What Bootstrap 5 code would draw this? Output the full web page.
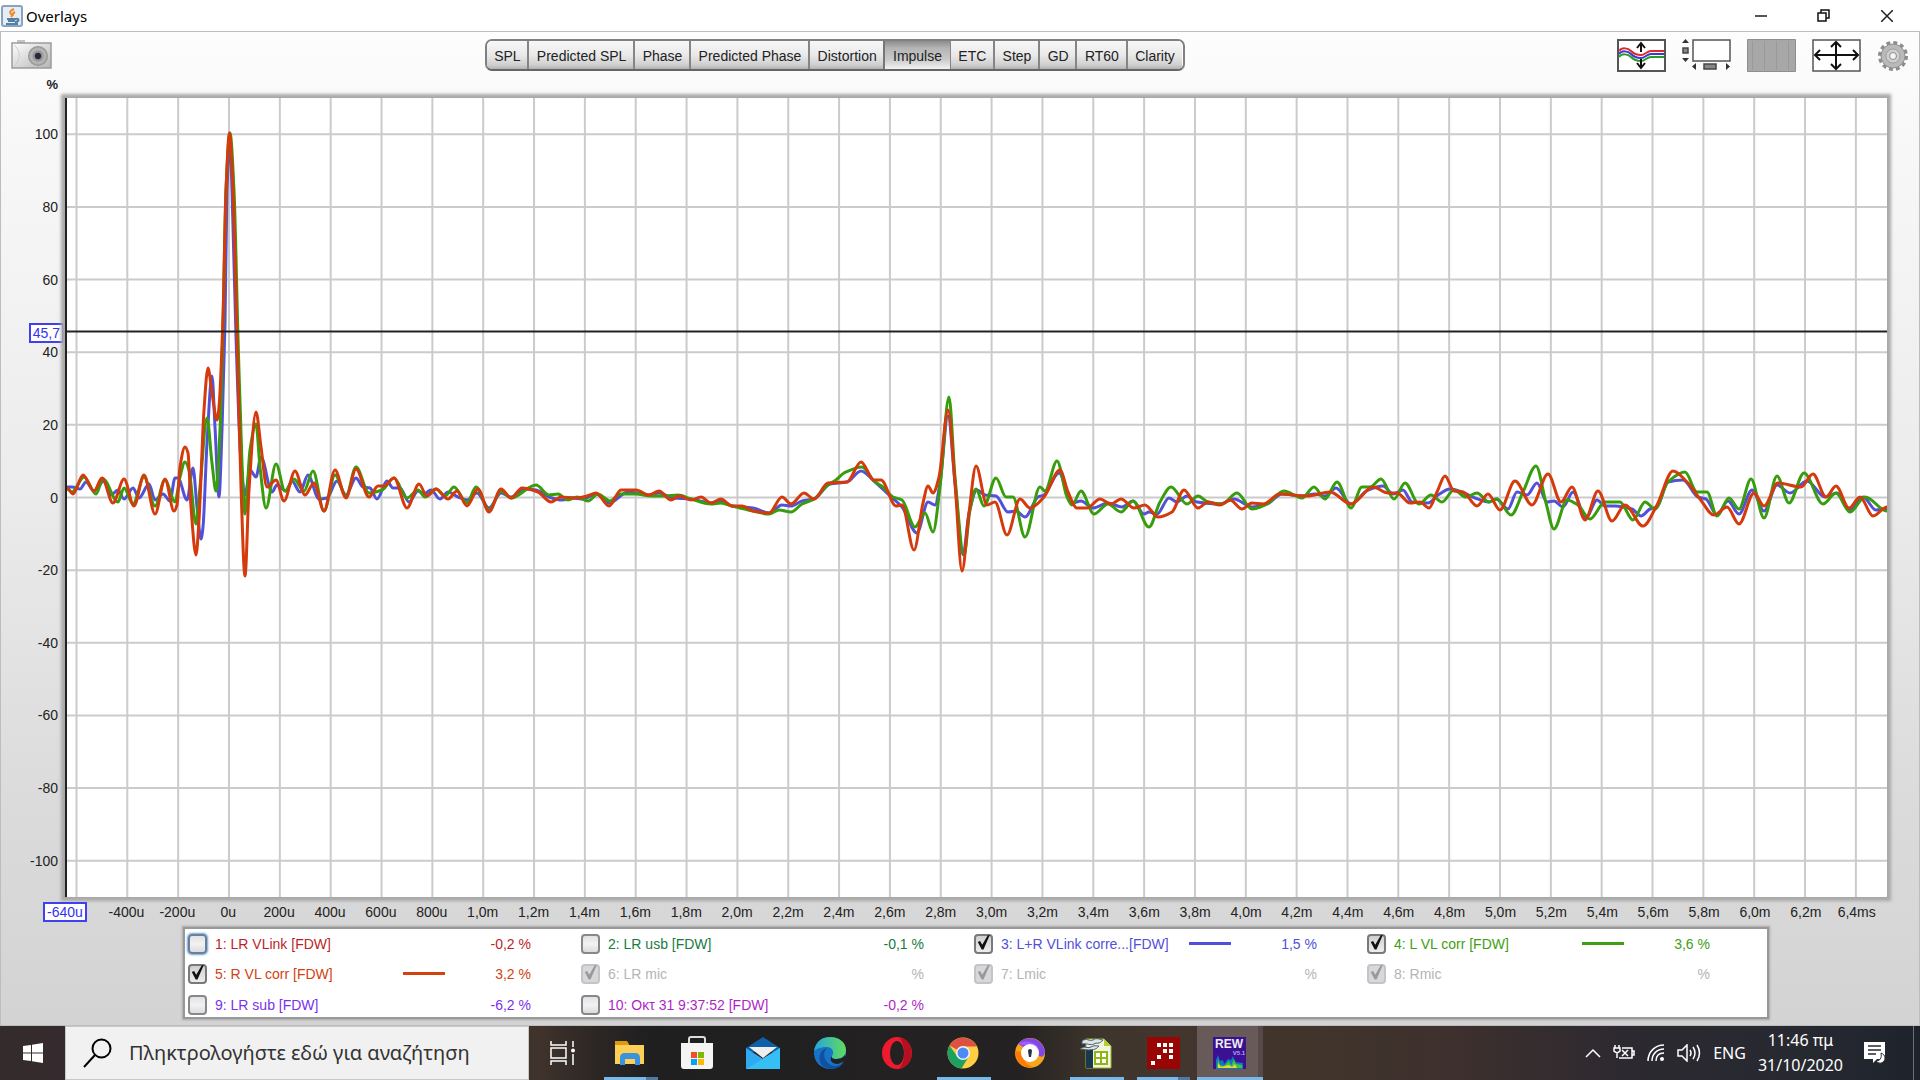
<!DOCTYPE html>
<html lang="el">
<head>
<meta charset="utf-8">
<meta name="viewport" content="width=device-width, initial-scale=1">
<title>Overlays</title>
<link href="https://cdn.jsdelivr.net/npm/bootstrap@5.3.0/dist/css/bootstrap.min.css" rel="stylesheet">
<style>
  body { font-family: "Liberation Sans", Arial, sans-serif; font-size: 14px; line-height: 20px; color: #222; background: #fff; overflow: hidden; }
  svg { display: block; }
  .ui-title { height: 31px; font-family: "Noto Sans", sans-serif; font-size: 15px; color: #000; padding-left: 1px; padding-right: 2px; }
  .ui-title .app-name { margin-left: 3px; }
  .win-btn { width: 63px; height: 30px; border: 0; background: none; padding: 0; display: flex; align-items: center; justify-content: center; }
  .workspace { border: 1px solid #bdbdbd; background: linear-gradient(#fdfdfd, #f8f8f8 10%, #ececec 45%, #dcdcdc 75%, #d3d3d3); min-height: 0; }
  .toolbar { height: 46px; padding: 7px 10px 0 9px; }
  .tool { border: 0; background: none; padding: 0; }
  .tabs { width: 700px; height: 32px; border: 2px solid #808080; border-bottom-color: #666; border-radius: 7px; overflow: hidden; }
  .tabs .btn { font-size: 14px; line-height: 20px; padding: 5px 5px 3px; color: #222; border: 0; border-left: 2px solid #858585; border-radius: 0; background: linear-gradient(#f8f8f8, #e9e9e9 50%, #d0d0d0 85%, #b2b2b2); white-space: nowrap; }
  .tabs .btn:first-child { border-left: 0; }
  .tabs .btn.active { color: #222; background: linear-gradient(#8c8c8c, #b4b4b4 25%, #c9c9c9 65%, #f2f2f2); border-color: #777; }
  .unit { height: 20px; width: 57px; text-align: right; margin-top: -3px; margin-bottom: 3px; font-weight: bold; font-size: 13px; }
  .plot-row { min-height: 0; }
  .y-axis { width: 64px; padding-right: 7px; position: relative; }
  .y-axis span { flex: 1 1 0; display: flex; align-items: center; justify-content: flex-end; }
  .plot { background: #fff; border-left: 2px solid #222; box-shadow: 0 0 3px 4px #a9a9a9; margin-right: 32px; min-width: 0; min-height: 0; position: relative; }
  .plot svg { position: absolute; inset: 0; width: 100%; height: 100%; }
  .grid-line { stroke: #cbcbcb; stroke-width: 2; vector-effect: non-scaling-stroke; }
  .trace { fill: none; stroke-width: 3; stroke-linejoin: round; vector-effect: non-scaling-stroke; }
  .readout { position: absolute; border: 2px solid #4040ee; background: #fff; color: #3333ee; line-height: 16px; padding: 0 2px; }
  .y-axis .readout { top: 28.1%; right: 1px; }
  .x-axis { height: 30px; padding: 5px 37px 0 100px; position: relative; }
  .x-axis span { flex: 1 1 0; width: 0; display: flex; justify-content: center; white-space: nowrap; }
  .x-axis .readout { left: 42px; top: 5px; width: auto; }
  .legend-box { margin: 0 150px 6px 182px; background: #fff; border: 2px solid #989898; box-shadow: 0 0 2px 1px #a8a8a8; padding: 0 7px 0 3px; height: 92px; display: grid; grid-template-columns: repeat(4, 1fr); grid-template-rows: 29px 31px 31px; align-content: start; }
  .trace-row { padding-right: 50px; }
  .trace-row label { margin-left: 8px; width: 180px; white-space: nowrap; flex: none; }
  .key { width: 42px; height: 3px; margin-left: 8px; background: currentColor; }
  .tick-box { appearance: none; width: 19px; height: 20px; flex: none; margin: 0; border: 2px solid #85898e; border-radius: 4px; background: linear-gradient(#e2e2e2, #f2f2f2 50%, #dcdcdc); position: relative; }
  .tick-box.focused { border-color: #68809a; box-shadow: 0 0 2px 1px #6aa5da; }
  .tick-box:checked { background: linear-gradient(#d0d0d0, #ededed); border-color: #77797c; }
  .tick-box:checked::before { content: ""; position: absolute; inset: -1px 1px 2px 1px; background: #111; clip-path: polygon(6% 50%, 24% 44%, 40% 68%, 82% 6%, 100% 0, 50% 100%, 36% 100%); }
  .tick-box:disabled { border-color: #c1c5cb; background: #d8d8d8; }
  .tick-box:disabled::before { background: #999; }
  .c1 { color: #bb1f29; } .c2 { color: #187a45; } .c3 { color: #5050d8; } .c4 { color: #3da012; }
  .c5 { color: #d3420f; } .c9 { color: #7b2ff0; } .c10 { color: #b01fc8; } .c-off { color: #b4b4b4; }
  .taskbar { height: 54px; background: linear-gradient(90deg, #342b2c 0, #352b2e 3.4%, #40332c 28%, #2c2725 31%, #1f1f20 34%, #232122 48%, #232122 53%, #3d352b 57%, #43362f 61%, #40342b 68%, #3d302e 76%, #2c2930 85%, #272931 94%, #1e232b); font-family: "Noto Sans", sans-serif; color: #fff; }
  .task-btn { border: 0; background: none; padding: 0; height: 54px; position: relative; display: flex; align-items: center; justify-content: center; }
  .start-btn { width: 65px; }
  .search-box { width: 464px; background: #f1f1f1; border: 1px solid #c8c8c8; padding-left: 17px; }
  .search-box input { border: 0; background: none; outline: 0; font-size: 20px; line-height: 28px; color: #333; padding: 0; width: 380px; margin-left: 17px; }
  .search-box input::placeholder { color: #333; opacity: 1; }
  .view-btn { width: 68px; }
  .apps { width: 666px; }
  .apps .task-btn { flex: 1 1 0; }
  .running::after { content: ""; position: absolute; bottom: 0; left: 7px; right: 6px; height: 3px; background: #76b9ed; }
  .stacked::after { background: linear-gradient(90deg, #76b9ed 78%, #4f7ba0 78%); }
  .current { background: linear-gradient(90deg, transparent 0, transparent 1px, #675a58 1px, #675a58 62px, #56494a 62px); }
  .current::after { left: 1px; right: 0; }
  .tray { gap: 12px; padding-right: 10px; }
  .tray .tray-text { font-size: 16px; line-height: 25px; text-align: center; }
  .desk-edge { width: 7px; border-left: 1px solid #6d7076; }
</style>
<script src="https://cdn.jsdelivr.net/npm/bootstrap@5.3.0/dist/js/bootstrap.bundle.min.js"></script>
</head>
<body class="vh-100 d-flex flex-column">

<header class="ui-title d-flex align-items-center flex-shrink-0">
  <svg width="22" height="22" viewBox="0 0 22 22"><rect x="1" y="1" width="20" height="20" rx="2" fill="#e6edf4" stroke="#86a4bf" stroke-width="2"/><path d="M13 4c-4 2-5 3-3 5s1 2 0 3M14 7c-2 1-3 2-2 4" fill="none" stroke="#ee8a30" stroke-width="2"/><path d="M6 14h9M7 16h7M5 19h12M15 14c4-1 3 3-1 3" fill="none" stroke="#5480a4" stroke-width="2"/></svg>
  <span class="app-name me-auto">Overlays</span>
  <button class="win-btn" aria-label="Minimize"><svg width="12" height="12"><path d="M0 6h12" stroke="#555" stroke-width="2"/></svg></button>
  <button class="win-btn" aria-label="Restore"><svg width="13" height="13" fill="none" stroke="#111" stroke-width="1.5"><path d="M1 4h8v8H1zM4 4V1h8v8H9"/></svg></button>
  <button class="win-btn" aria-label="Close"><svg width="12" height="12" stroke="#222" stroke-width="1.5"><path d="M0 0l12 12M12 0L0 12"/></svg></button>
</header>

<main class="workspace flex-fill d-flex flex-column">
  <div class="toolbar d-flex justify-content-between align-items-start flex-shrink-0">
    <button class="tool" aria-label="Capture">
      <svg width="42" height="32" viewBox="0 0 42 32"><defs><linearGradient id="cam" x2="1" y2="1"><stop stop-color="#fff"/><stop offset="1" stop-color="#b5b5b5"/></linearGradient><radialGradient id="lens"><stop offset=".15" stop-color="#1b1b2a"/><stop offset=".35" stop-color="#888"/><stop offset=".7" stop-color="#bbb"/><stop offset="1" stop-color="#8d8d8d"/></radialGradient></defs><path d="M7 1h8v4H7z" fill="#c4c4c4"/><path d="M2 4h39v25H2z" fill="url(#cam)" stroke="#9c9c9c" stroke-width="1.5"/><path d="M4 6c7 5 7 15 0 22" fill="none" stroke="#ccc"/><circle cx="28" cy="17" r="10" fill="url(#lens)"/><circle cx="28" cy="17" r="3" fill="#26263c"/></svg>
    </button>
    <div class="tabs btn-group" role="group" aria-label="Graph type">
      <button class="btn">SPL</button><button class="btn">Predicted SPL</button><button class="btn">Phase</button><button class="btn">Predicted Phase</button><button class="btn">Distortion</button><button class="btn active" aria-pressed="true">Impulse</button><button class="btn">ETC</button><button class="btn">Step</button><button class="btn">GD</button><button class="btn">RT60</button><button class="btn">Clarity</button>
    </div>
    <div class="d-flex justify-content-end gap-3">
      <button class="tool" aria-label="Separate traces"><svg width="49" height="33" viewBox="0 0 49 33" fill="none"><path d="M1 1h47v31H1z" fill="#fff" stroke="#555" stroke-width="2"/><g stroke-width="2"><path d="M2 12c3-4 9-3 12 0s6 4 10 4 6-4 10-4h13" stroke="#dd2a2a"/><path d="M2 15c3-4 9-3 12 0s6 4 10 4 6-4 10-4h13" stroke="#3a3acc"/><path d="M2 18c3-4 9-3 12 0s6 4 10 4 6-4 10-4h13" stroke="#2a9a2a"/></g><path d="M24 4v9M24 20v9M20 9l4-5 4 5M20 24l4 5 4-5" stroke="#111" stroke-width="2"/></svg></button>
      <button class="tool" aria-label="Scroll bars"><svg width="49" height="33" viewBox="0 0 49 33"><path d="M11 1h37v21H11z" fill="#fff" stroke="#555" stroke-width="1.5"/><path d="M0 4h7L3.500 0zM0 19h7l-3.500 4zM14 24v7l-4-3.500zM44 24v7l4-3.500z" fill="#333"/><path d="M1 9h5v5H1zM22 25h12v5H22z" fill="#888" stroke="#444" stroke-width="1.500"/></svg></button>
      <button class="tool" aria-label="Bands"><svg width="49" height="33" viewBox="0 0 49 33"><path d="M.5.5h48v32H.5z" fill="#a7a7a7" stroke="#8e8e8e"/><path d="M5.500 2v29M17.500 2v29M29.500 2v29M41.500 2v29" stroke="#999"/></svg></button>
      <button class="tool" aria-label="Graph limits"><svg width="49" height="33" viewBox="0 0 49 33"><path d="M1 1h47v31H1z" fill="#fff" stroke="#555" stroke-width="1.500"/><path d="M3 16h43M24 3v27M8 11l-5 5 5 5M41 11l5 5-5 5M19 8l5-5 5 5M19 25l5 5 5-5" fill="none" stroke="#111" stroke-width="2"/></svg></button>
      <button class="tool" aria-label="Controls"><svg width="32" height="33" viewBox="0 0 32 33"><circle cx="16" cy="17" r="13" fill="none" stroke="#8c8c8c" stroke-width="4" stroke-dasharray="3.8 3"/><circle cx="16" cy="17" r="12" fill="#b9b9b9" stroke="#8f8f8f"/><circle cx="16" cy="17" r="7" fill="#d0d0d0" stroke="#a0a0a0"/><circle cx="16" cy="17" r="3.500" fill="#f5f5f5" stroke="#8a8a8a"/></svg></button>
    </div>
  </div>

  <div class="unit flex-shrink-0">%</div>

  <div class="plot-row d-flex flex-fill">
    <div class="y-axis d-flex flex-column flex-shrink-0" id="yAxis">
      <span class="readout">45,7</span>
    </div>
    <div class="plot flex-fill">
      <svg id="chart" viewBox="67 98 1820 799" preserveAspectRatio="none" role="img" aria-label="Impulse response"></svg>
    </div>
  </div>

  <div class="x-axis d-flex flex-shrink-0" id="xAxis">
    <span class="readout">-640u</span>
  </div>

  <div class="legend-box flex-shrink-0">
    <div class="trace-row d-flex align-items-center c1"><input class="tick-box focused" type="checkbox" id="t1"><label for="t1">1: LR VLink [FDW]</label><span class="ms-auto">-0,2 %</span></div>
    <div class="trace-row d-flex align-items-center c2"><input class="tick-box" type="checkbox" id="t2"><label for="t2">2: LR usb [FDW]</label><span class="ms-auto">-0,1 %</span></div>
    <div class="trace-row d-flex align-items-center c3"><input class="tick-box" type="checkbox" id="t3" checked><label for="t3">3: L+R VLink corre...[FDW]</label><i class="key"></i><span class="ms-auto">1,5 %</span></div>
    <div class="trace-row d-flex align-items-center c4"><input class="tick-box" type="checkbox" id="t4" checked><label for="t4">4: L VL corr [FDW]</label><i class="key"></i><span class="ms-auto">3,6 %</span></div>
    <div class="trace-row d-flex align-items-center c5"><input class="tick-box" type="checkbox" id="t5" checked><label for="t5">5: R VL corr [FDW]</label><i class="key"></i><span class="ms-auto">3,2 %</span></div>
    <div class="trace-row d-flex align-items-center c-off"><input class="tick-box" type="checkbox" id="t6" checked disabled><label for="t6">6: LR mic</label><span class="ms-auto">%</span></div>
    <div class="trace-row d-flex align-items-center c-off"><input class="tick-box" type="checkbox" id="t7" checked disabled><label for="t7">7: Lmic</label><span class="ms-auto">%</span></div>
    <div class="trace-row d-flex align-items-center c-off"><input class="tick-box" type="checkbox" id="t8" checked disabled><label for="t8">8: Rmic</label><span class="ms-auto">%</span></div>
    <div class="trace-row d-flex align-items-center c9"><input class="tick-box" type="checkbox" id="t9"><label for="t9">9: LR sub [FDW]</label><span class="ms-auto">-6,2 %</span></div>
    <div class="trace-row d-flex align-items-center c10"><input class="tick-box" type="checkbox" id="t10"><label for="t10">10: Οκτ 31 9:37:52 [FDW]</label><span class="ms-auto">-0,2 %</span></div>
  </div>
</main>

<footer class="taskbar d-flex flex-shrink-0">
  <button class="task-btn start-btn" aria-label="Start"><svg width="20" height="20" viewBox="0 0 20 20" fill="#fff"><path d="M0 3l8-1v7.500H0zM9 1.800L20 0v9.500H9zM0 10.500h8V18l-8-1zM9 10.500h11V20L9 18.200z"/></svg></button>
  <div class="search-box d-flex align-items-center">
    <svg width="29" height="30" viewBox="0 0 29 30" fill="none" stroke="#000" stroke-width="2"><circle cx="18.500" cy="10.500" r="9"/><path d="M12 17L1 29"/></svg>
    <input type="text" aria-label="Αναζήτηση" placeholder="Πληκτρολογήστε εδώ για αναζήτηση">
  </div>
  <button class="task-btn view-btn" aria-label="Task view"><svg width="26" height="24" viewBox="0 0 26 24" fill="none" stroke="#fff" stroke-width="1.500"><path d="M1 0v4h15V0M1 24v-4h15v4M1 7h15v10H1zM23 0v6M23 13v11"/><circle cx="23" cy="9.500" r="2" fill="#fff" stroke="none"/></svg></button>
  <div class="apps d-flex">
    <button class="task-btn running stacked" aria-label="File Explorer"><svg width="30" height="24" viewBox="0 0 30 24"><path d="M0 0h12l2 3v3H0z" fill="#dc9a0c"/><path d="M0 4h29v19H0z" fill="#fbcf58"/><path d="M5 24v-7q0-5 5-5h10q5 0 5 5v7h-5v-6H10v6z" fill="#3993de"/></svg></button>
    <button class="task-btn" aria-label="Store"><svg width="34" height="34" viewBox="0 0 34 34"><path d="M9 8V3q0-2 2-2h12q2 0 2 2v5" fill="none" stroke="#ddd" stroke-width="2"/><path d="M1 7h32v23q0 3-3 3H4q-3 0-3-3z" fill="#f4f4f4"/><path d="M11 16h6v6h-6z" fill="#f25022"/><path d="M18 16h6v6h-6z" fill="#7fba00"/><path d="M11 23h6v6h-6z" fill="#00a4ef"/><path d="M18 23h6v6h-6z" fill="#ffb900"/></svg></button>
    <button class="task-btn" aria-label="Mail"><svg width="34" height="32" viewBox="0 0 34 32"><path d="M0 11L17 0l17 11v4H0z" fill="#0f5ea8"/><path d="M0 11l17 11 17-11v21H0z" fill="#2fa9ef"/><path d="M0 32l34-21v21z" fill="#35bff5"/><path d="M3 10h28L17 21z" fill="#eee"/></svg></button>
    <button class="task-btn" aria-label="Edge"><svg width="34" height="34" viewBox="0 0 34 34"><defs><linearGradient id="edg" x2="1"><stop stop-color="#25a5dd"/><stop offset="1" stop-color="#62dc5b"/></linearGradient></defs><circle cx="17" cy="17" r="16" fill="#1873c8"/><path d="M1 15C3 4 10 1 17 1c10 0 16 6 16 13 0 6-5 9-10 9-3 0-5-1-4-3 3-4 0-9-5-9-6 0-11 2-13 4z" fill="url(#edg)"/><path d="M14 12c-6 6-2 17 8 18 4 0 7-2 9-5-3 8-13 10-20 6C4 27 5 14 14 12z" fill="#12519f"/><path d="M19 20c-1 2 1 3 4 3 4 0 7-1 9-4l2 5-9 4c-7 0-9-5-6-8z" fill="#222"/></svg></button>
    <button class="task-btn" aria-label="Opera"><svg width="30" height="32" viewBox="0 0 30 32"><ellipse cx="15" cy="16" rx="15" ry="16" fill="#ee1b2e"/><path d="M17 1c17 1 17 29 0 30 7-5 7-25 0-30z" fill="#b5101f"/><ellipse cx="15" cy="16" rx="7" ry="12" fill="#222"/></svg></button>
    <button class="task-btn running" aria-label="Chrome"><svg width="32" height="32" viewBox="0 0 32 32"><circle cx="16" cy="16" r="15.500" fill="#ffce44"/><path d="M16 16L2.500 8.500a15.500 15.500 0 0 1 27.500 1H16z" fill="#dd5144"/><path d="M2.500 8.500A15.500 15.500 0 0 0 14.500 31.500L22 19H10z" fill="#1da160"/><circle cx="16" cy="16" r="7" fill="#f3f3f3"/><circle cx="16" cy="16" r="5.500" fill="#4c8bf5"/></svg></button>
    <button class="task-btn" aria-label="Secure Browser"><svg width="30" height="32" viewBox="0 0 30 32"><circle cx="15" cy="16" r="15" fill="#f6a61d"/><path d="M3 7C10-3 28 0 30 15c-1 5-4 6-7 3z" fill="#7f49e8"/><path d="M3 7c7-5 18-2 21 5L12 9z" fill="#a65cff"/><path d="M0 14c0 10 8 18 18 16-6-2-10-6-11-15z" fill="#ff7a00"/><circle cx="15" cy="16" r="9" fill="#fff"/><path d="M13 14a2 2 0 1 1 4 0l-1 6h-2z" fill="#234"/></svg></button>
    <button class="task-btn running" aria-label="Calc"><svg width="32" height="32" viewBox="0 0 32 32"><path d="M6 2h18l7 7v22H6z" fill="#f1f5dc" stroke="#9db434"/><path d="M24 2v7h7z" fill="#b4cc38"/><path d="M6 10h7v21H6z" fill="#17384e"/><path d="M14 14h14v14H14z" fill="#8fb612"/><path d="M16 16h4v4h-4zM22 16h4v4h-4zM16 22h4v4h-4zM22 22h4v4h-4z" fill="#fff"/><path d="M2 4c5-4 7 1 11-1 4-3 7 0 10 0-4 5-6 2-9 4-4 2-6-1-12 0z" fill="#dce4e8" stroke="#4a5f6c"/><path d="M0 12c5-4 7 0 11-2 3-2 5-1 8-1-4 5-7 3-10 4-3 0-5-1-9-1z" fill="#dce4e8" stroke="#4a5f6c"/></svg></button>
    <button class="task-btn running stacked" aria-label="Player"><svg width="33" height="32" viewBox="0 0 33 32"><path d="M0 0h33v32H0z" fill="#990505"/><path d="M10 6h4v4h-4zM16 6h4v4h-4zM22 6h4v4h-4zM16 12h4v4h-4zM22 12h4v4h-4zM10 18h4v4h-4zM22 18h4v4h-4zM4 24h4v4H4z" fill="#fff"/></svg></button>
    <button class="task-btn running current" aria-label="REW"><svg width="33" height="32" viewBox="0 0 33 32"><path d="M0 0h33v32H0z" fill="#3a1193"/><path d="M3 32V23l2-5 2 6 3-1 1 4 4-5 3 1 2-4 2 6 8 1v6z" fill="#1673c0"/><path d="M4 31l1-9 2 6 4 1 5-5 2 5 3-7 2 5 6 1v3z" fill="#32c848"/><path d="M5 31v-5l3 4 8-2 3 2 3-3 2 4z" fill="#ecd52f"/><text x="16" y="11" text-anchor="middle" font-family="Liberation Sans, sans-serif" font-weight="bold" font-size="12" fill="#eee">REW</text><text x="26" y="18" text-anchor="middle" font-family="Liberation Sans, sans-serif" font-weight="bold" font-size="6" fill="#bba5f0">V5.1</text></svg></button>
  </div>
  <div class="tray d-flex align-items-center ms-auto">
    <svg width="16" height="10" fill="none" stroke="#fff" stroke-width="1.500"><path d="M1 9l7-7 7 7"/></svg>
    <svg width="22" height="18" viewBox="0 0 22 18" fill="none" stroke="#fff" stroke-width="1.500"><path d="M2 1v3M6 1v3M1 4h6v3L4 9 1 7zM4 9v5M9 4h10v10H6M19 7h2v4h-2M9 6l6 6M15 6l-6 6"/></svg>
    <svg width="18" height="18" viewBox="0 0 18 18" fill="none" stroke="#fff" stroke-width="1.500"><path d="M1 17C1 8 8 1 17 1M5 17c0-7 5-12 12-12M9 17c0-5 3-8 8-8"/><circle cx="15" cy="15" r="2" fill="#fff" stroke="none"/></svg>
    <svg width="24" height="18" viewBox="0 0 24 18" fill="none" stroke="#fff" stroke-width="1.500"><path d="M1 6h4l5-5v16l-5-5H1zM13 6q2 3 0 6M16 3q4 6 0 12M20 1q5 8 0 16"/></svg>
    <span class="tray-text">ENG</span>
    <div class="tray-text">11:46 πμ<br>31/10/2020</div>
    <svg class="ms-2 me-3" width="24" height="24" viewBox="0 0 24 24"><path d="M1 1h21v17h-8l-4 4v-4H1z" fill="#fff"/><path d="M5 5h13M5 9h13M5 13h8" stroke="#272931" stroke-width="1.500"/><path d="M18 12c1 5-1 8-5 8 3 4 9 2 9-3 0-3-2-4-4-5z" fill="#fff" stroke="#272931"/></svg>
  </div>
  <div class="desk-edge"></div>
</footer>

<script>
  const NS = 'http://www.w3.org/2000/svg';
  const chart = document.getElementById('chart');
  // Chart units: one 200 us step is 50.84 wide, one 20 % step is 72.65 high.
  const X0 = 229, DX = 50.84, Y0 = 497.500, DY = 72.65;

  function add(name, attrs) {
    const el = document.createElementNS(NS, name);
    for (const k in attrs) el.setAttribute(k, attrs[k]);
    chart.appendChild(el);
  }
  for (let i = -3; i <= 32; i++) add('line', { class: 'grid-line', x1: X0 + i * DX, x2: X0 + i * DX, y1: 98, y2: 897 });
  for (let i = -5; i <= 5; i++) add('line', { class: 'grid-line', x1: 67, x2: 1887, y1: Y0 - i * DY, y2: Y0 - i * DY });

  for (let v = 100; v >= -100; v -= 20) {
    const s = document.createElement('span');
    s.textContent = v;
    document.getElementById('yAxis').appendChild(s);
  }
  for (let i = -2; i <= 32; i++) {
    const s = document.createElement('span');
    s.textContent = i < 5 ? i * 200 + 'u' : (i / 5).toFixed(1).replace('.', ',') + (i === 32 ? 'ms' : 'm');
    document.getElementById('xAxis').appendChild(s);
  }

  // Monotone cubic through the samples, so that peaks stay where they are.
  function curve(text) {
    const p = text.trim().split(/\s+/).map(s => s.split(',').map(Number));
    const n = p.length, d = [], m = [];
    for (let i = 0; i < n - 1; i++) d.push((p[i + 1][1] - p[i][1]) / (p[i + 1][0] - p[i][0]));
    for (let i = 0; i < n; i++) {
      if (i === 0 || i === n - 1 || d[i - 1] * d[i] <= 0) m.push(0);
      else m.push(2 * d[i - 1] * d[i] / (d[i - 1] + d[i]));
    }
    let out = 'M' + p[0];
    for (let i = 0; i < n - 1; i++) {
      const h = (p[i + 1][0] - p[i][0]) / 3;
      out += `C${p[i][0] + h},${p[i][1] + m[i] * h} ${p[i + 1][0] - h},${p[i + 1][1] - m[i + 1] * h} ${p[i + 1]}`;
    }
    return out;
  }
  const traces = [
    ['#5252d8', `67,487 72,487 80,489 86,482 94,491 104,481 111,495 118,490 124,499 133,488 139,498 149,484 155,500 163,494 170,501 175,478 178,478 187,500 193,468 197,507 201,539 203,527 207,443 212,376 215,427 219,497 222,430 225,323 227,190 230,140 232,190 236,337 241,463 245,495 250,470 256,477 261,457 272,492 277,485 286,491 292,481 300,492 308,475 319,499 327,498 337,481 346,495 356,478 363,487 370,488 377,499 387,481 393,488 400,488 409,502 418,491 424,494 431,490 440,499 448,492 458,497 467,500 477,493 489,508 501,493 511,497 524,489 536,490 549,497 562,500 573,498 583,499 596,494 609,503 628,492 649,495 659,493 673,498 691,499 711,503 721,501 732,506 753,508 769,513 782,505 791,506 802,501 814,499 830,484 847,482 861,471 874,481 889,495 902,507 917,533 928,502 935,505 940,483 948,416 955,483 963,555 969,513 977,490 985,495 996,496 1008,512 1016,511 1025,517 1038,497 1044,495 1059,473 1072,503 1081,501 1093,508 1108,503 1122,507 1133,501 1144,514 1149,512 1157,514 1169,498 1177,502 1187,496 1197,502 1220,504 1234,499 1252,507 1267,504 1282,494 1302,496 1315,494 1325,496 1336,488 1351,504 1368,490 1383,486 1393,494 1403,490 1412,502 1428,503 1438,495 1450,489 1462,492 1475,498 1489,502 1496,499 1508,509 1517,492 1527,495 1537,483 1547,502 1554,501 1563,507 1573,492 1586,518 1597,500 1605,506 1615,506 1632,509 1641,516 1650,509 1657,507 1668,482 1683,480 1698,497 1706,499 1717,515 1728,501 1739,514 1752,490 1764,511 1777,485 1790,493 1807,481 1825,497 1837,493 1849,510 1863,497 1876,510 1887,509`],
    ['#379d0c', `67,489 72,492 84,477 96,494 103,479 118,502 124,488 133,504 144,477 155,506 165,480 175,502 180,477 185,462 189,470 196,524 200,487 207,418 212,463 216,491 220,430 223,323 226,190 230,133 234,190 238,337 242,463 245,514 250,450 256,424 260,467 266,508 276,464 285,491 294,479 304,491 313,471 324,511 335,475 346,496 356,467 369,493 382,490 394,478 407,498 418,490 425,497 436,489 445,496 454,487 467,503 476,487 489,510 501,491 511,498 536,485 549,495 558,494 568,500 577,497 588,501 598,494 610,501 620,494 636,494 651,496 665,496 678,495 691,499 711,504 721,503 732,506 753,511 769,514 779,510 791,512 802,504 814,499 828,485 836,480 844,473 862,467 874,481 883,487 893,497 902,500 915,527 925,513 933,532 940,487 949,397 955,477 964,555 970,510 976,489 984,506 996,478 1006,497 1013,497 1025,537 1040,487 1045,491 1057,461 1067,497 1072,505 1081,491 1094,514 1108,504 1121,512 1133,501 1149,527 1160,502 1171,487 1187,504 1198,496 1208,502 1222,504 1237,493 1252,509 1267,504 1284,491 1302,498 1314,487 1325,499 1337,482 1351,508 1362,487 1370,487 1381,479 1394,499 1405,483 1419,504 1431,495 1442,502 1454,490 1466,497 1477,493 1489,502 1497,499 1511,515 1523,492 1536,466 1546,503 1554,529 1567,500 1578,505 1590,519 1605,502 1620,502 1633,520 1645,502 1655,509 1668,482 1685,472 1697,492 1707,492 1717,516 1729,498 1739,509 1751,479 1764,518 1777,476 1789,503 1804,473 1823,504 1836,493 1850,512 1865,497 1887,511`],
    ['#d43a0b', `67,488 73,494 83,475 94,491 102,478 113,503 124,479 134,506 144,475 155,514 165,479 174,511 177,505 180,467 185,447 188,453 191,507 196,555 199,520 204,410 208,368 212,393 217,420 219,407 223,317 226,190 229.500,133 233,190 237,337 241,487 245,576 249,490 256,412 261,447 267,487 276,480 284,501 295,471 305,495 314,483 324,511 335,470 346,498 356,469 369,497 378,486 384,486 394,478 407,508 419,484 427,496 436,489 448,499 457,491 467,506 478,489 489,512 501,489 511,498 522,488 538,492 551,502 561,497 575,498 587,496 596,493 609,506 621,490 636,490 649,495 659,491 671,500 679,496 691,500 701,497 711,503 721,499 732,506 742,506 753,511 769,513 782,497 791,504 804,493 814,499 828,483 847,482 861,462 874,480 881,480 896,506 902,505 914,550 923,503 928,486 933,493 939,477 948,410 955,483 962,571 969,513 976,466 987,505 995,502 1007,535 1020,499 1030,508 1044,497 1060,470 1068,492 1077,508 1087,508 1100,499 1111,504 1121,499 1134,508 1145,505 1158,517 1172,512 1184,490 1198,508 1208,502 1220,505 1230,500 1242,509 1252,503 1263,504 1280,494 1307,496 1330,492 1351,504 1373,487 1388,493 1397,493 1410,503 1420,502 1429,508 1437,492 1445,476 1454,491 1463,492 1477,506 1488,494 1500,510 1515,481 1532,505 1548,474 1561,502 1572,487 1585,520 1598,491 1612,521 1625,505 1643,526 1657,505 1673,471 1687,482 1700,499 1714,515 1727,507 1739,524 1754,493 1764,506 1778,483 1801,487 1813,474 1826,497 1836,486 1849,508 1860,497 1873,516 1887,507`]
  ];
  for (const [color, pts] of traces) add('path', { class: 'trace', stroke: color, d: curve(pts) });
  add('line', { x1: 67, x2: 1887, y1: 331.500, y2: 331.500, stroke: '#222', 'stroke-width': 2, 'vector-effect': 'non-scaling-stroke' });
</script>
</body>
</html>
